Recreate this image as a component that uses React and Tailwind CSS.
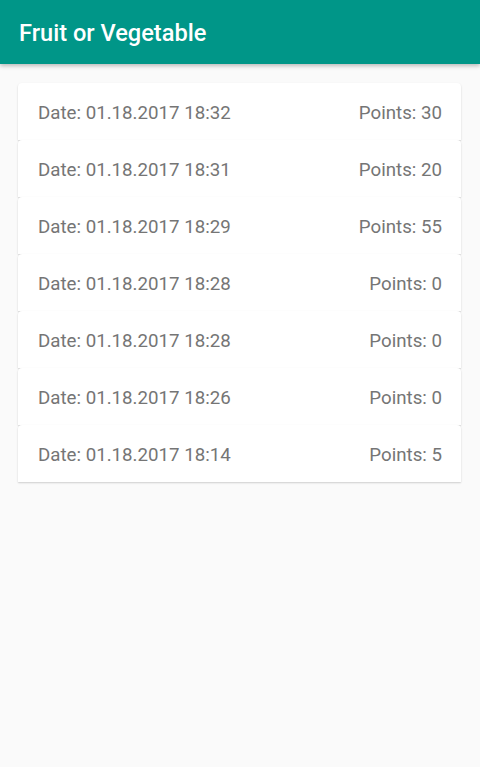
const rows = [
  { date: "01.18.2017 18:32", points: 30 },
  { date: "01.18.2017 18:31", points: 20 },
  { date: "01.18.2017 18:29", points: 55 },
  { date: "01.18.2017 18:28", points: 0 },
  { date: "01.18.2017 18:28", points: 0 },
  { date: "01.18.2017 18:26", points: 0 },
  { date: "01.18.2017 18:14", points: 5 },
];

const App = () => {
  return (
    <div className="min-h-[767px] bg-[#fafafa] font-['Roboto',sans-serif]">
      <header className="h-16 bg-[#009688] flex items-center px-[19px] pt-[3px] shadow-[0_2px_4px_rgba(0,0,0,0.25)]">
        <h1 className="text-white text-[23.6px] font-medium">Fruit or Vegetable</h1>
      </header>
      <main className="pt-[19px] px-[18px] w-[479px]">
        {rows.map((row, i) => (
          <div
            key={i}
            className="h-[57px] bg-white rounded-t-sm flex items-center justify-between pl-5 pr-[19px] pt-[3px] text-[18.7px] text-[#757575] shadow-[0_1px_2px_rgba(0,0,0,0.18)]"
          >
            <span>Date: {row.date}</span>
            <span>Points: {row.points}</span>
          </div>
        ))}
      </main>
    </div>
  );
};

export default App;
